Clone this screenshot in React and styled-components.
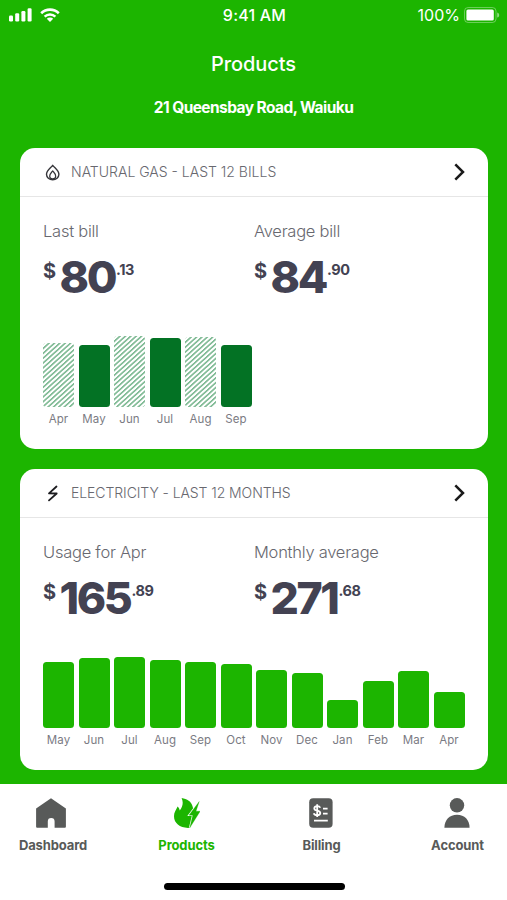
import styled, { createGlobalStyle } from 'styled-components';

const gasBills = [
  { month: 'Apr', height: 64, estimated: true },
  { month: 'May', height: 62 },
  { month: 'Jun', height: 71, estimated: true },
  { month: 'Jul', height: 69 },
  { month: 'Aug', height: 70, estimated: true },
  { month: 'Sep', height: 62.5 },
];

const powerUsage = [
  { month: 'May', height: 66 },
  { month: 'Jun', height: 70.5 },
  { month: 'Jul', height: 71 },
  { month: 'Aug', height: 68.5 },
  { month: 'Sep', height: 66 },
  { month: 'Oct', height: 64 },
  { month: 'Nov', height: 58.5 },
  { month: 'Dec', height: 55 },
  { month: 'Jan', height: 28.5 },
  { month: 'Feb', height: 47.5 },
  { month: 'Mar', height: 57.5 },
  { month: 'Apr', height: 36.5 },
];

function SignalIcon() {
  return (
    <svg width="23" height="14" viewBox="0 0 23 14" fill="#fff">
      <rect x="0" y="7.5" width="4" height="6" rx="1.2" />
      <rect x="6.2" y="5.3" width="4" height="8.2" rx="1.2" />
      <rect x="12.4" y="3" width="4" height="10.5" rx="1.2" />
      <rect x="18.6" y="0.3" width="4" height="13.2" rx="1.2" />
    </svg>
  );
}

function WifiIcon() {
  return (
    <svg width="20" height="14" viewBox="0 0 20 14" fill="none">
      <path d="M1.2 5.2a12.6 12.6 0 0 1 17.6 0" stroke="#fff" strokeWidth="2.6" />
      <path d="M4.6 8.6a7.8 7.8 0 0 1 10.8 0" stroke="#fff" strokeWidth="2.4" />
      <path d="M6.8 10.8a4.6 4.6 0 0 1 6.4 0L10 14z" fill="#fff" />
    </svg>
  );
}

function BatteryIcon() {
  return (
    <svg width="36" height="16" viewBox="0 0 36 16">
      <rect x="0.5" y="0.5" width="31.5" height="15" rx="3.6" fill="none" stroke="#fff" strokeOpacity="0.35" />
      <rect x="2.4" y="2.4" width="27.4" height="11.2" rx="1.6" fill="#fff" />
      <path d="M33.2 5.4c1.4.4 2 1.3 2 2.6s-.6 2.2-2 2.6z" fill="#fff" fillOpacity="0.5" />
    </svg>
  );
}

function GasIcon() {
  return (
    <svg width="16" height="17" viewBox="0 0 16 17" fill="none" stroke="#35353a" strokeWidth="1.4" strokeLinejoin="round">
      <path d="M7.700 1.300C5.800 4 1.500 6.300 1.500 10.300a6.200 5.500 0 0 0 12.400 0C13.900 6.300 9.600 4 7.700 1.300z" />
      <path d="M7.700 6.900C6.700 8.300 4.700 9.500 4.700 12.200C4.700 13.800 6 14.800 7.700 14.800S10.700 13.800 10.700 12.200C10.700 9.500 8.700 8.300 7.700 6.900z" strokeWidth="1.2" />
    </svg>
  );
}

function BoltIcon() {
  return (
    <svg width="12" height="17" viewBox="0 0 12 17" fill="none" stroke="#1c1c20" strokeWidth="1.8" strokeLinejoin="round" strokeLinecap="round">
      <path d="M9.500 1.500L2 8.300L9.700 8.500L2 15.300" />
    </svg>
  );
}

function ChevronIcon() {
  return (
    <svg width="12" height="18" viewBox="0 0 12 18" fill="none" stroke="#1a1a1a" strokeWidth="2.500">
      <path d="M1.300 1.300L9 9L1.300 16.700" />
    </svg>
  );
}

function HomeIcon() {
  return (
    <svg width="31" height="30" viewBox="0 0 31 30" fill="currentColor">
      <path d="M15 .2L29.900 10.500V28.800a1 1 0 0 1-1 1H18.600V23.500a3.400 3.400 0 0 0-6.800 0V29.800H1.100a1 1 0 0 1-1-1V10.500z" />
    </svg>
  );
}

function EnergyIcon() {
  return (
    <svg width="26" height="30" viewBox="0 0 26 30" fill="currentColor">
      <path d="M7.600 0C13 .8 17.600 3.400 18.600 8.600L19 10L19 20L16 29.800C6.500 30.600 0 25.500 0 18.300C0 14.500 2 12 3.600 8.600C5 9.800 5.600 11.200 5.700 12.600C8.800 8.800 9.600 4.300 7.600 0z" />
      <path d="M25.200 3.600L15 17.200H18.800L15.800 29.800L26.200 13.200H22z" stroke="#fff" strokeWidth="1.700" />
      <path d="M25.200 3.600L15 17.200H18.800L15.800 29.800L26.200 13.200H22z" stroke="currentColor" strokeWidth=".3" />
    </svg>
  );
}

function BillIcon() {
  return (
    <svg width="26" height="30" viewBox="0 0 26 30">
      <rect x="0.200" y="0.200" width="23.400" height="29.600" rx="4" fill="currentColor" />
      <g fill="none" stroke="#fff" strokeWidth="1.800">
        <path d="M11.200 9.800C10.800 8.600 9.600 8.200 8.200 8.200C6.400 8.200 5.300 9.100 5.300 10.400C5.300 13.600 11.300 11.500 11.300 15C11.300 16.400 10 17.200 8.200 17.200C6.500 17.200 5.200 16.500 4.800 15.200M8.200 6.300V19" />
        <path d="M14 10.700H18.600M14 15.700H18.600M5 22.600H18.800" />
      </g>
    </svg>
  );
}

function PersonIcon() {
  return (
    <svg width="26" height="30" viewBox="0 0 26 30" fill="currentColor">
      <circle cx="13" cy="7.300" r="7.200" />
      <path d="M.4 29.800C.4 22 5.500 16.800 13 16.800S25.600 22 25.600 29.800z" />
    </svg>
  );
}

function BillCard({ icon, title, spacing, figures, bars, color }) {
  return (
    <StCard>
      <StCardHeader>
        <StCardIcon>{icon}</StCardIcon>
        <StCardTitle $spacing={spacing}>{title}</StCardTitle>
        <ChevronIcon />
      </StCardHeader>
      <StCardBody>
        <StFigures>
          {figures.map((figure) => (
            <div key={figure.label}>
              <StLabel>{figure.label}</StLabel>
              <StAmount>
                <StCurrency>$</StCurrency>
                <StDollars>{figure.dollars}</StDollars>
                <StCents>.{figure.cents}</StCents>
              </StAmount>
            </div>
          ))}
        </StFigures>
        <StChart>
          {bars.map((bar) => (
            <StColumn key={bar.month}>
              <StBar
                $color={color}
                $estimated={bar.estimated}
                style={{ height: bar.height }}
              />
              <StMonth>{bar.month}</StMonth>
            </StColumn>
          ))}
        </StChart>
      </StCardBody>
    </StCard>
  );
}

export default function App() {
  return (
    <>
      <GlobalStyle />
      <StScreen>
        <StStatusBar>
          <StStatusLeft>
            <SignalIcon />
            <WifiIcon />
          </StStatusLeft>
          <StTime>9:41 AM</StTime>
          <StStatusRight>
            100%
            <BatteryIcon />
          </StStatusRight>
        </StStatusBar>
        <StTitle>Products</StTitle>
        <StAddress>21 Queensbay Road, Waiuku</StAddress>

        <StCards>
          <BillCard
            icon={<GasIcon />}
            title="NATURAL GAS - LAST 12 BILLS"
            spacing="0"
            figures={[
              { label: 'Last bill', dollars: '80', cents: '13' },
              { label: 'Average bill', dollars: '84', cents: '90' },
            ]}
            bars={gasBills}
            color="#037224"
          />
          <BillCard
            icon={<BoltIcon />}
            title="ELECTRICITY - LAST 12 MONTHS"
            spacing="-0.08px"
            figures={[
              { label: 'Usage for Apr', dollars: '165', cents: '89' },
              { label: 'Monthly average', dollars: '271', cents: '68' },
            ]}
            bars={powerUsage}
            color="#1cb500"
          />
        </StCards>

        <StTabBar>
          <StTabs>
            <StTab>
              <HomeIcon />
              <StTabLabel $left={3}>Dashboard</StTabLabel>
            </StTab>
            <StTab $active>
              <EnergyIcon />
              <StTabLabel>Products</StTabLabel>
            </StTab>
            <StTab>
              <BillIcon />
              <StTabLabel>Billing</StTabLabel>
            </StTab>
            <StTab>
              <PersonIcon />
              <StTabLabel $left={2}>Account</StTabLabel>
            </StTab>
          </StTabs>
          <StHomeIndicator />
        </StTabBar>
      </StScreen>
    </>
  );
}

const GlobalStyle = createGlobalStyle`
  * {
    box-sizing: border-box;
  }
  body {
    margin: 0;
    font-family: Inter, 'Liberation Sans', sans-serif;
  }
  svg {
    display: block;
    flex-shrink: 0;
  }
`;

const StScreen = styled.div`
  width: 507px;
  height: 900px;
  display: flex;
  flex-direction: column;
  background-color: #1cb500;
  overflow: hidden;
`;

const StStatusBar = styled.div`
  height: 30px;
  padding: 0 7px 0 9px;
  display: grid;
  grid-template-columns: 1fr auto 1fr;
  align-items: center;
  color: #fff;
  font-size: 16px;
  line-height: 20px;
`;

const StStatusLeft = styled.div`
  display: flex;
  gap: 8px;
`;

const StTime = styled.div`
  font-weight: 500;
  letter-spacing: 0.2px;
`;

const StStatusRight = styled.div`
  display: flex;
  justify-content: flex-end;
  align-items: center;
  gap: 4px;
`;

const StTitle = styled.div`
  margin-top: 21px;
  color: #fff;
  font-size: 20px;
  font-weight: 500;
  line-height: 26px;
  letter-spacing: -0.1px;
  text-align: center;
`;

const StAddress = styled.div`
  margin-top: 20px;
  color: #fff;
  font-size: 15.5px;
  font-weight: 700;
  line-height: 21px;
  letter-spacing: -0.57px;
  text-align: center;
`;

const StCards = styled.div`
  margin-top: 30px;
  padding: 0 19px 0 20px;
  display: flex;
  flex-direction: column;
  gap: 20px;
`;

const StCard = styled.div`
  height: 301px;
  border-radius: 15px;
  background-color: #fff;
`;

const StCardHeader = styled.div`
  height: 49px;
  padding: 0 22px 0 25px;
  display: flex;
  align-items: center;
  border-bottom: 1px solid #e6e6e6;
`;

const StCardIcon = styled.div`
  width: 16px;
  display: flex;
  justify-content: center;
`;

const StCardTitle = styled.div`
  flex: 1;
  margin-left: 10px;
  color: #68686f;
  font-size: 14px;
  font-weight: 300;
  line-height: 20px;
  letter-spacing: ${({ $spacing }) => $spacing};
`;

const StCardBody = styled.div`
  padding: 24px 23px 0;
`;

const StFigures = styled.div`
  display: grid;
  grid-template-columns: 1fr 1fr;
`;

const StLabel = styled.div`
  color: #68686f;
  font-size: 16.5px;
  font-weight: 300;
  line-height: 20px;
  letter-spacing: -0.25px;
`;

const StAmount = styled.div`
  height: 35px;
  margin-top: 19px;
  display: flex;
  align-items: flex-start;
  color: #434252;
  font-weight: 700;
`;

const StCurrency = styled.span`
  width: 16.5px;
  font-size: 20px;
  line-height: 22px;
`;

const StDollars = styled.span`
  font-size: 44.5px;
  font-weight: 800;
  line-height: 35px;
  letter-spacing: -2.4px;
`;

const StCents = styled.span`
  margin-left: 1px;
  font-size: 14.5px;
  line-height: 19px;
  letter-spacing: -0.4px;
`;

const StChart = styled.div`
  height: 90px;
  margin-top: 41px;
  display: flex;
  align-items: flex-end;
  gap: 4.5px;
`;

const StColumn = styled.div`
  width: 31px;
  display: flex;
  flex-direction: column;
  align-items: center;
`;

const StBar = styled.div`
  width: 31px;
  border-radius: 3.5px;
  background: ${({ $color, $estimated }) =>
    $estimated
      ? 'repeating-linear-gradient(138deg, #85bd99 0 1px, #fff 1.8px 3px, #85bd99 3.6px)'
      : $color};
`;

const StMonth = styled.div`
  margin-top: 5px;
  color: #7b7b83;
  font-size: 11.5px;
  line-height: 14px;
  letter-spacing: 0.1px;
`;

const StTabBar = styled.div`
  flex: 1;
  margin-top: 14px;
  background-color: #fff;
`;

const StTabs = styled.div`
  margin-left: -16px;
  padding-top: 14px;
  display: grid;
  grid-template-columns: repeat(4, 135px);
`;

const StTab = styled.div`
  display: flex;
  flex-direction: column;
  align-items: center;
  color: ${({ $active }) => ($active ? '#1cb500' : '#585a59')};
`;

const StTabLabel = styled.div`
  margin-top: 8px;
  padding-left: ${({ $left }) => $left || 0}px;
  font-size: 13px;
  font-weight: 700;
  line-height: 18px;
  letter-spacing: -0.12px;
`;

const StHomeIndicator = styled.div`
  width: 181px;
  height: 7px;
  margin: 29px 0 0 164px;
  border-radius: 4px;
  background-color: #000;
`;
